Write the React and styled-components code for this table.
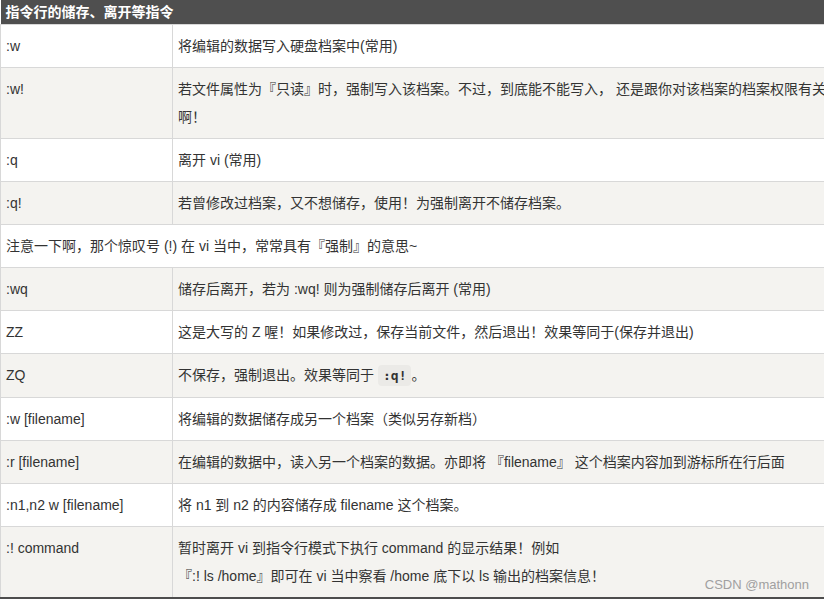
import React from "react";
import styled, { createGlobalStyle } from "styled-components";

const GlobalStyle = createGlobalStyle`
    html, body {
        margin: 0;
        padding: 0;
        background: #ffffff;
        overflow: hidden;
    }
    body {
        font-family: "Liberation Sans", "Noto Sans CJK SC", sans-serif;
        color: #333333;
    }
`;

const rows = [
    { cmd: ":w", desc: "将编辑的数据写入硬盘档案中(常用)" },
    {
        cmd: ":w!",
        desc: "若文件属性为『只读』时，强制写入该档案。不过，到底能不能写入， 还是跟你对该档案的档案权限有关啊！",
    },
    { cmd: ":q", desc: "离开 vi (常用)" },
    { cmd: ":q!", desc: "若曾修改过档案，又不想储存，使用！为强制离开不储存档案。" },
    { note: "注意一下啊，那个惊叹号 (!) 在 vi 当中，常常具有『强制』的意思~" },
    { cmd: ":wq", desc: "储存后离开，若为 :wq! 则为强制储存后离开 (常用)" },
    { cmd: "ZZ", desc: "这是大写的 Z 喔！如果修改过，保存当前文件，然后退出！效果等同于(保存并退出)" },
    { cmd: "ZQ", desc: "不保存，强制退出。效果等同于", code: ":q!", tail: "。" },
    { cmd: ":w [filename]", desc: "将编辑的数据储存成另一个档案（类似另存新档）" },
    { cmd: ":r [filename]", desc: "在编辑的数据中，读入另一个档案的数据。亦即将 『filename』 这个档案内容加到游标所在行后面" },
    { cmd: ":n1,n2 w [filename]", desc: "将 n1 到 n2 的内容储存成 filename 这个档案。" },
    {
        cmd: ":! command",
        desc: "暂时离开 vi 到指令行模式下执行 command 的显示结果！例如",
        second: "『:! ls /home』即可在 vi 当中察看 /home 底下以 ls 输出的档案信息！",
    },
];

const App = () => {
    return (
        <Page>
            <GlobalStyle />
            <Table>
                <colgroup>
                    <col style={{ width: 172 }} />
                    <col />
                </colgroup>
                <thead>
                    <tr>
                        <Header colSpan={2}>指令行的储存、离开等指令</Header>
                    </tr>
                </thead>
                <tbody>
                    {rows.map((row, idx) => (
                        <Row key={idx} $shaded={idx % 2 === 1}>
                            {row.note ? (
                                <Cell colSpan={2}>{row.note}</Cell>
                            ) : (
                                <>
                                    <Cell>{row.cmd}</Cell>
                                    <Cell>
                                        {row.desc}
                                        {row.code && <Code>{row.code}</Code>}
                                        {row.tail}
                                        {row.second && (
                                            <>
                                                <br />
                                                {row.second}
                                            </>
                                        )}
                                    </Cell>
                                </>
                            )}
                        </Row>
                    ))}
                </tbody>
            </Table>
            <Watermark>CSDN @mathonn</Watermark>
        </Page>
    );
};

// 전체 페이지
const Page = styled.div`
    position: relative;
    width: 824px;
    height: 599px;
    overflow: hidden;
`;

const Table = styled.table`
    width: 842px;
    table-layout: fixed;
    border-collapse: collapse;
    font-size: 14px;
    border-bottom: 2px solid #4d4d4d;
`;

// 제목 줄
const Header = styled.th`
    background: #4f4f4f;
    color: #ffffff;
    font-weight: bold;
    font-size: 14px;
    text-align: left;
    height: 24px;
    line-height: 24px;
    padding: 0 5px;
`;

const Row = styled.tr`
    background: ${({ $shaded }) => ($shaded ? "#f4f3f0" : "#ffffff")};
`;

const Cell = styled.td`
    border: 1px solid #d8d8d8;
    padding: 7px 5px;
    line-height: 28px;
    vertical-align: top;
    color: #333333;
`;

const Code = styled.code`
    font-family: "DejaVu Sans Mono", "Liberation Mono", monospace;
    font-weight: bold;
    font-size: 13px;
    background: #ebeae7;
    border-radius: 4px;
    padding: 3px 5px;
    margin-left: 4px;
    color: #333333;
`;

// 워터마크
const Watermark = styled.div`
    position: absolute;
    right: 15px;
    bottom: 7px;
    font-size: 13px;
    color: #a0a0a0;
`;

export default App;
